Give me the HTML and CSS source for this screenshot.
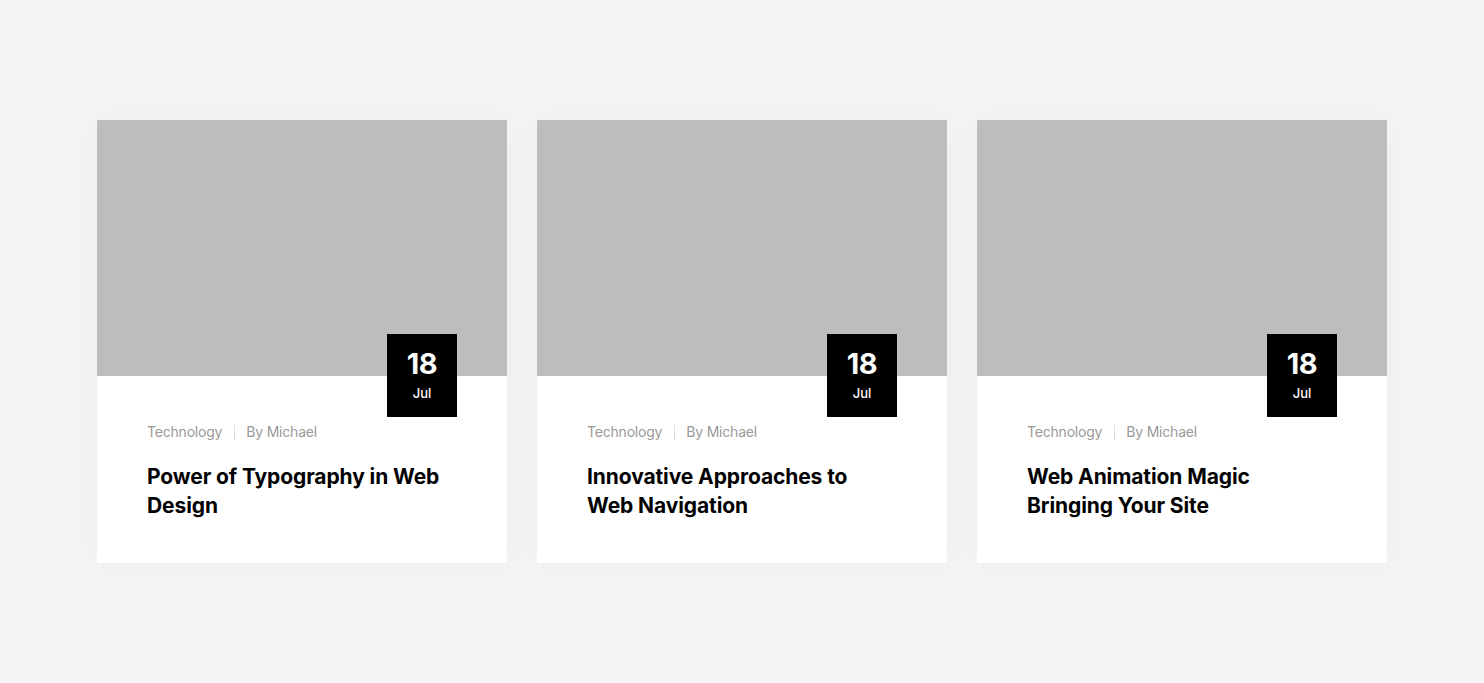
FILE: index.html
```html
<!DOCTYPE html>
<html>
<head>
<meta charset="utf-8">
<link rel="stylesheet" href="styles.css">
</head>
<body>
<section class="blog">
  <article class="card">
    <div class="thumb">
      <div class="date"><span class="day">18</span><span class="mon">Jul</span></div>
    </div>
    <div class="body">
      <div class="meta"><span>Technology</span><span class="sep"></span><span>By Michael</span></div>
      <h3 class="title">Power of Typography in Web Design</h3>
    </div>
  </article>
  <article class="card">
    <div class="thumb">
      <div class="date"><span class="day">18</span><span class="mon">Jul</span></div>
    </div>
    <div class="body">
      <div class="meta"><span>Technology</span><span class="sep"></span><span>By Michael</span></div>
      <h3 class="title">Innovative Approaches to Web Navigation</h3>
    </div>
  </article>
  <article class="card">
    <div class="thumb">
      <div class="date"><span class="day">18</span><span class="mon">Jul</span></div>
    </div>
    <div class="body">
      <div class="meta"><span>Technology</span><span class="sep"></span><span>By Michael</span></div>
      <h3 class="title">Web Animation Magic Bringing Your Site</h3>
    </div>
  </article>
</section>
</body>
</html>
```
FILE: styles.css
```css
* { box-sizing: border-box; }
html, body { margin: 0; padding: 0; }
body {
  background: #f4f4f4;
  font-family: Inter, "Noto Sans", sans-serif;
  height: 683px;
}
.blog {
  width: 1290px;
  margin: 0 auto;
  padding-top: 120px;
  display: grid;
  grid-template-columns: repeat(3, 410px);
  gap: 30px;
}
.card {
  background: #fff;
  box-shadow: 0 0 30px rgba(0, 0, 0, 0.03);
}
.thumb {
  position: relative;
  height: 256px;
  background: #bcbdbf;
}
.date {
  position: absolute;
  right: 50px;
  bottom: -41px;
  width: 70px;
  height: 83px;
  background: #000;
  color: #fff;
  display: flex;
  flex-direction: column;
  align-items: center;
  padding-top: 14px;
}
.day {
  font-size: 29px;
  font-weight: 700;
  line-height: 32px;
  letter-spacing: -0.5px;
}
.mon {
  font-size: 13px;
  font-weight: 500;
  line-height: 18px;
  margin-top: 4px;
}
.body {
  padding: 44px 50px 43px;
}
.meta {
  display: flex;
  align-items: center;
  font-size: 14px;
  line-height: 24px;
  color: #9a9a9a;
  letter-spacing: -0.2px;
}
.sep {
  width: 1px;
  height: 15px;
  background: #dcdcdc;
  margin: 0 11px 0 12px;
}
.title {
  margin: 18px 0 0;
  padding-right: 10px;
  font-size: 21px;
  font-weight: 700;
  line-height: 29px;
  color: #000;
  letter-spacing: -0.1px;
}
```
